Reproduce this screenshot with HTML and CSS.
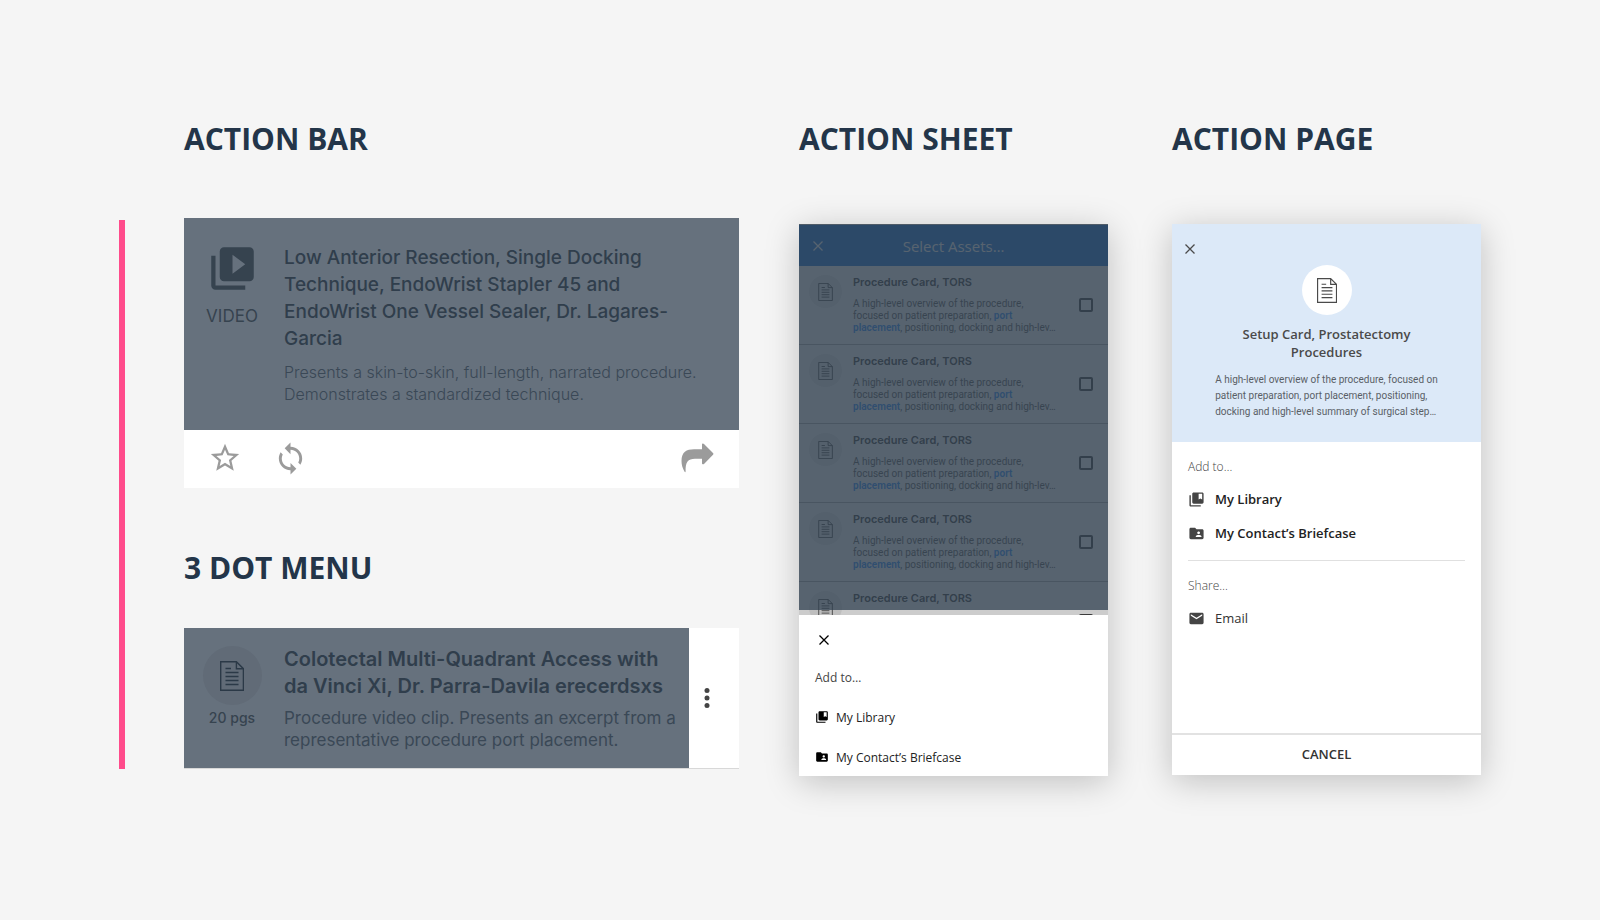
FILE: index.html
```html
<!DOCTYPE html>
<html lang="en">
<head>
<meta charset="utf-8">
<title>Action patterns</title>
<link rel="stylesheet" href="styles.css">
</head>
<body>
<svg class="defs" aria-hidden="true">
  <symbol id="i-doc" viewBox="0 0 24 30"><path fill="none" stroke="currentColor" stroke-width="1.400" d="M.7.7h15.700l7 7v21.600H.7zM16.400.7v7h7M5.500 7.500h5.500M5.500 11.500h13M5.500 15.500h13M5.500 19.500h13M5.500 23.500h13"/></symbol>
  <symbol id="i-x" viewBox="0 0 10 10"><path fill="none" stroke="currentColor" stroke-width="1.300" d="M.5.5l9 9M9.500.5l-9 9"/></symbol>
  <symbol id="i-library" viewBox="0 0 24 24"><path fill="currentColor" d="M4 6H2v14c0 1.100.9 2 2 2h14v-2H4V6zm16-4H8c-1.100 0-2 .9-2 2v12c0 1.100.9 2 2 2h12c1.100 0 2-.9 2-2V4c0-1.100-.9-2-2-2zm0 10l-2.500-1.500L15 12V4h5v8z"/></symbol>
  <symbol id="i-folder" viewBox="0 0 24 24"><path fill="currentColor" d="M20 6h-8l-2-2H4c-1.100 0-2 .9-2 2v12c0 1.100.9 2 2 2h16c1.100 0 2-.9 2-2V8c0-1.100-.9-2-2-2zm-5 3c1.100 0 2 .9 2 2s-.9 2-2 2-2-.9-2-2 .9-2 2-2zm4 8h-8v-1c0-1.330 2.670-2 4-2s4 .670 4 2v1z"/></symbol>
</svg>
<main class="board">
  <div class="lead">
    <div class="accent"></div>
    <section class="stack">
      <h2 class="heading">ACTION BAR</h2>
      <article class="card">
        <div class="card-body">
          <div class="media">
            <svg class="video-icon" viewBox="0 0 24 24" aria-hidden="true"><path fill="currentColor" d="M4 6H2v14c0 1.100.9 2 2 2h14v-2H4V6zm16-4H8c-1.100 0-2 .9-2 2v12c0 1.100.9 2 2 2h12c1.100 0 2-.9 2-2V4c0-1.100-.9-2-2-2zm-8 12.500v-9l6 4.500-6 4.500z"/></svg>
            <span class="media-label">VIDEO</span>
          </div>
          <div class="copy">
            <h3 class="title">Low Anterior Resection, Single Docking<br>Technique, EndoWrist Stapler 45 and<br>EndoWrist One Vessel Sealer, Dr. Lagares-<br>Garcia</h3>
            <p class="desc desc-light">Presents a skin-to-skin, full-length, narrated procedure.<br>Demonstrates a standardized technique.</p>
          </div>
        </div>
        <div class="actions">
          <button class="icon-btn" aria-label="Favorite"><svg width="34" height="34" viewBox="0 0 24 24"><path fill="currentColor" d="M22 9.240l-7.190-.620L12 2 9.190 8.630 2 9.240l5.460 4.730L5.820 21 12 17.270 18.180 21l-1.630-7.030L22 9.240zM12 15.400l-3.760 2.270 1-4.280-3.320-2.880 4.380-.380L12 6.100l1.710 4.040 4.380.380-3.320 2.880 1 4.280L12 15.400z"/></svg></button>
          <button class="icon-btn" aria-label="Sync"><svg width="35" height="35" viewBox="0 0 24 24"><path fill="currentColor" d="M12 4V1L8 5l4 4V6c3.310 0 6 2.690 6 6 0 1.010-.250 1.970-.7 2.800l1.460 1.460C19.540 15.030 20 13.570 20 12c0-4.420-3.580-8-8-8zm0 14c-3.310 0-6-2.690-6-6 0-1.010.250-1.970.7-2.800L5.240 7.740C4.460 8.970 4 10.430 4 12c0 4.420 3.580 8 8 8v3l4-4-4-4v3z"/></svg></button>
          <button class="icon-btn share" aria-label="Share"><svg width="33" height="30" viewBox="0 0 33 30"><path fill="currentColor" d="M21 1.500C21 .3 22.200 0 23 .9l9 9c.6.6.6 1.200 0 1.800l-9 9.200c-.8.8-2 .5-2-.7V15.700H14C7 15.700 4.300 19 4.600 28.500c0 .8-.7.9-1 .2C1.500 25 .5 22 .5 18 .5 9 5.500 6.200 13 6.200h8z"/></svg></button>
        </div>
      </article>
      <h2 class="heading second">3 DOT MENU</h2>
      <article class="card menu-card">
        <div class="card-body compact">
          <div class="media">
            <span class="disc disc-lg"><svg width="24" height="30"><use href="#i-doc"/></svg></span>
            <span class="pages">20 pgs</span>
          </div>
          <div class="copy">
            <h3 class="title title-strong">Colotectal Multi-Quadrant Access with<br>da Vinci Xi, Dr. Parra-Davila erecerdsxs</h3>
            <p class="desc">Procedure video clip. Presents an excerpt from a<br>representative procedure port placement.</p>
          </div>
        </div>
        <button class="dots" aria-label="More options"><svg width="6" height="20" viewBox="0 0 6 20"><g fill="#444"><circle cx="3" cy="2.500" r="2.500"/><circle cx="3" cy="10" r="2.500"/><circle cx="3" cy="17.500" r="2.500"/></g></svg></button>
      </article>
    </section>
  </div>

  <section class="column">
    <h2 class="heading">ACTION SHEET</h2>
    <div class="phone phone-sheet">
      <div class="assets">
        <header class="assets-bar">
          <button class="icon-btn" aria-label="Close"><svg width="10" height="10"><use href="#i-x"/></svg></button>
          <h3 class="assets-title">Select Assets…</h3>
        </header>
        <ul class="asset-list">
          <li class="asset"><span class="disc disc-sm"><svg width="15" height="18"><use href="#i-doc"/></svg></span><div class="asset-copy"><h4>Procedure Card, TORS</h4><p>A high-level overview of the procedure,<br>focused on patient preparation, <a href="#port">port</a><br><a href="#port">placement</a>, positioning, docking and high-lev…</p></div><input type="checkbox" aria-label="Select Procedure Card, TORS"></li>
          <li class="asset"><span class="disc disc-sm"><svg width="15" height="18"><use href="#i-doc"/></svg></span><div class="asset-copy"><h4>Procedure Card, TORS</h4><p>A high-level overview of the procedure,<br>focused on patient preparation, <a href="#port">port</a><br><a href="#port">placement</a>, positioning, docking and high-lev…</p></div><input type="checkbox" aria-label="Select Procedure Card, TORS"></li>
          <li class="asset"><span class="disc disc-sm"><svg width="15" height="18"><use href="#i-doc"/></svg></span><div class="asset-copy"><h4>Procedure Card, TORS</h4><p>A high-level overview of the procedure,<br>focused on patient preparation, <a href="#port">port</a><br><a href="#port">placement</a>, positioning, docking and high-lev…</p></div><input type="checkbox" aria-label="Select Procedure Card, TORS"></li>
          <li class="asset"><span class="disc disc-sm"><svg width="15" height="18"><use href="#i-doc"/></svg></span><div class="asset-copy"><h4>Procedure Card, TORS</h4><p>A high-level overview of the procedure,<br>focused on patient preparation, <a href="#port">port</a><br><a href="#port">placement</a>, positioning, docking and high-lev…</p></div><input type="checkbox" aria-label="Select Procedure Card, TORS"></li>
          <li class="asset"><span class="disc disc-sm"><svg width="15" height="18"><use href="#i-doc"/></svg></span><div class="asset-copy"><h4>Procedure Card, TORS</h4></div><input type="checkbox" aria-label="Select Procedure Card, TORS"></li>
        </ul>
        <div class="scrim"></div>
      </div>
      <div class="sheet">
        <button class="icon-btn sheet-close" aria-label="Close"><svg width="10" height="10"><use href="#i-x"/></svg></button>
        <p class="sheet-label">Add to…</p>
        <button class="sheet-item"><svg width="14" height="14"><use href="#i-library"/></svg>My Library</button>
        <button class="sheet-item"><svg width="14" height="14"><use href="#i-folder"/></svg>My Contact’s Briefcase</button>
      </div>
    </div>
  </section>

  <section class="column column-last">
    <h2 class="heading">ACTION PAGE</h2>
    <div class="phone">
      <header class="hero">
        <button class="icon-btn hero-close" aria-label="Close"><svg width="10" height="10"><use href="#i-x"/></svg></button>
        <span class="disc disc-hero"><svg width="20" height="25"><use href="#i-doc"/></svg></span>
        <h3 class="hero-title">Setup Card, Prostatectomy<br>Procedures</h3>
        <p class="hero-desc">A high-level overview of the procedure, focused on<br>patient preparation, port placement, positioning,<br>docking and high-level summary of surgical step…</p>
      </header>
      <div class="group">
        <p class="group-label">Add to…</p>
        <button class="group-item strong"><svg width="17" height="17"><use href="#i-library"/></svg>My Library</button>
        <button class="group-item strong"><svg width="17" height="17"><use href="#i-folder"/></svg>My Contact’s Briefcase</button>
      </div>
      <div class="group">
        <p class="group-label">Share…</p>
        <button class="group-item"><svg width="17" height="17" viewBox="0 0 24 24"><path fill="currentColor" d="M20 4H4c-1.100 0-2 .9-2 2v12c0 1.100.9 2 2 2h16c1.100 0 2-.9 2-2V6c0-1.100-.9-2-2-2zm0 4l-8 5-8-5V6l8 5 8-5v2z"/></svg>Email</button>
      </div>
      <button class="cancel">CANCEL</button>
    </div>
  </section>
</main>
</body>
</html>
```
FILE: styles.css
```css
* { box-sizing: border-box; }
body { margin: 0; min-height: 100vh; background: #f5f5f5; font-family: "Open Sans", "Noto Sans", sans-serif; color: #333; }
h2, h3, h4, p, ul { margin: 0; padding: 0; }
svg { display: block; flex: none; }
button { border: 0; background: none; padding: 0; margin: 0; font: inherit; color: inherit; cursor: pointer; }
.defs { position: absolute; width: 0; height: 0; }

.board { display: grid; grid-template-columns: minmax(0, 620fr) minmax(0, 309fr) minmax(0, 313fr); padding: 118px 119px 60px; column-gap: 60px; align-items: start; }
.column-last { padding-left: 4px; }
.lead { display: flex; gap: 59px; }
.accent { flex: none; width: 6px; margin-top: 102px; background: #ff4b8b; }
.stack { flex: 1; min-width: 0; }
.heading { font-size: 30px; line-height: 41px; font-weight: 700; color: #233549; white-space: nowrap; }

.card { margin-top: 59px; background: #fff; }
.card-body { display: flex; flex: 1; min-width: 0; padding: 26px 12px 25px 0; background: #66717d; color: #303e4c; font-family: Inter, sans-serif; }
.media { flex: none; width: 96px; margin-right: 4px; display: flex; flex-direction: column; align-items: center; color: #36434f; }
.video-icon { width: 51px; height: 51px; margin-top: -1px; }
.media-label { margin-top: 10px; font-size: 17px; line-height: 24px; }
.copy { flex: 1; min-width: 0; white-space: nowrap; }
.title { font-size: 19px; line-height: 27px; font-weight: 500; }
.title-strong { font-size: 20px; font-weight: 600; }
.desc { margin-top: 7px; font-size: 17px; line-height: 22px; color: #3a4856; }
.desc-light { margin-top: 9px; font-size: 16px; font-weight: 300; }
.actions { display: flex; align-items: center; gap: 31px; height: 58px; padding: 0 25px 2px 24px; color: #9b9b9b; }
.icon-btn { flex: none; display: block; }
.share { margin-left: auto; }
.second { margin-top: 59px; }
.menu-card { margin-top: 40px; display: flex; border-bottom: 1px solid #d8d8d8; }
.compact { padding: 18px 12px 17px 0; }
.disc { display: flex; flex: none; align-items: center; justify-content: center; border-radius: 50%; }
.disc-lg { width: 59px; height: 59px; background: #616b77; color: #2b3947; }
.pages { margin-top: 3px; font-size: 14px; line-height: 20px; font-weight: 500; }
.dots { flex: none; width: 50px; display: flex; align-items: center; padding-left: 15px; }

.phone { display: flex; flex-direction: column; margin-top: 65px; aspect-ratio: 309 / 551; background: #fff; box-shadow: 0 6px 32px rgba(0, 0, 0, .22); }
.phone-sheet { aspect-ratio: 309 / 552; }
.assets { position: relative; flex: 1 1 0; min-height: 0; overflow: hidden; font-family: Roboto, sans-serif; color: #4a4a4a; }
.assets-bar { display: flex; align-items: center; height: 42px; padding: 0 14px; background: #287ddc; color: #fff; border-top: 1px solid #ddd; }
.assets-title { flex: 1; padding-right: 10px; text-align: center; font: 500 15px/20px "Open Sans", sans-serif; }
.asset-list { list-style: none; }
.asset { display: flex; height: 79px; padding: 9px 15px 0 10px; border-bottom: 1px solid #bbb; }
.disc-sm { width: 33px; height: 33px; background: #eee; }
.asset-copy { flex: 1; min-width: 0; margin-left: 11px; white-space: nowrap; }
.asset-copy h4 { font: 600 11px/15px Inter, sans-serif; }
.asset-copy p { margin-top: 8px; font-size: 10px; line-height: 12px; color: #666; }
.asset a { color: #3c96ff; font-weight: 600; text-decoration: none; }
.asset input { appearance: none; flex: none; width: 14px; height: 14px; margin: 23px 0 0; border: 2px solid #4a4a4a; border-radius: 2px; }
.scrim { position: absolute; inset: 0 0 5px; background: rgba(45, 60, 75, .8); box-shadow: 0 5px 0 rgba(0, 0, 0, .2); }
.sheet { padding: 20px 16px 9px; }
.sheet-close { margin-left: 4px; color: #000; }
.sheet-label { margin: 24px 0 20px; font-size: 12px; line-height: 18px; color: #444; }
.sheet-item { display: flex; align-items: center; gap: 7px; width: 100%; height: 20px; font-size: 12px; font-weight: 500; color: #222; }
.sheet-item + .sheet-item { margin-top: 20px; }
.sheet-item svg { color: #000; }

.hero { display: flex; flex-direction: column; align-items: center; padding: 20px 13px 22px; background: #dce9f8; color: #4a4a4a; }
.hero-close { align-self: flex-start; }
.disc-hero { width: 50px; height: 50px; margin-top: 11px; background: #fff; }
.hero-title { margin-top: 10px; font-size: 13px; line-height: 18px; font-weight: 600; text-align: center; }
.hero-desc { margin-top: 11px; font: 400 10px/16px Roboto, sans-serif; white-space: nowrap; color: #5a5f66; }
.group { margin: 0 16px; padding: 16px 0 10px; }
.group + .group { border-top: 1px solid #e0e0e0; }
.group-label { font-size: 12px; line-height: 18px; font-weight: 300; color: #444; margin-bottom: 6px; }
.group-item { display: flex; align-items: center; gap: 10px; width: 100%; height: 34px; font-size: 13px; color: #333; }
.group-item svg { color: #444; }
.strong { font-weight: 600; color: #222; }
.cancel { margin-top: auto; height: 42px; padding-bottom: 2px; border-top: 2px solid #e2e2e2; font-size: 13px; font-weight: 600; }
```
